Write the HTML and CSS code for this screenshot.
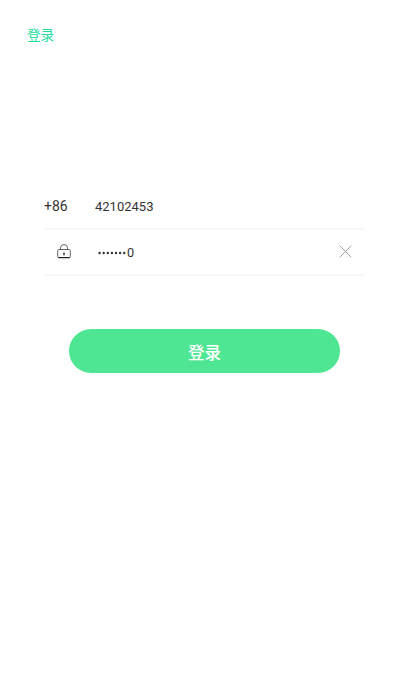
FILE: index.html
```html
<!DOCTYPE html>
<html lang="zh-CN">
<head>
<meta charset="utf-8">
<title>登录</title>
<link rel="stylesheet" href="styles.css">
</head>
<body>
<header class="title">登录</header>
<main>
  <form class="form">
    <div class="row"><span class="code">+86</span><span class="phone">42102453</span></div>
    <div class="row">
      <svg class="lock" viewBox="0 0 14 15"><path d="M3.5 5.5V4a3.5 3.5 0 0 1 7 0v1.5"/><rect x=".7" y="5.5" width="12.6" height="8.2" rx="1"/><path class="base" d="M1.3 13.6h11.4"/><path class="key" d="M7 8.5v2.7"/></svg>
      <span class="password"><svg class="dots" viewBox="0 0 29 4"><circle cx="1.6" cy="2" r="1.2"/><circle cx="5.7" cy="2" r="1.2"/><circle cx="9.8" cy="2" r="1.2"/><circle cx="13.9" cy="2" r="1.2"/><circle cx="18" cy="2" r="1.2"/><circle cx="22.1" cy="2" r="1.2"/><circle cx="26.2" cy="2" r="1.2"/></svg>0</span>
      <svg class="clear" viewBox="0 0 13 13"><path d="M.7.7l11.6 11.6M12.3.7L.7 12.3"/></svg>
    </div>
    <button class="submit" type="button">登录</button>
  </form>
</main>
</body>
</html>
```
FILE: styles.css
```css
* { box-sizing: border-box; }
body {
  margin: 0;
  height: 695px;
  background: #fff;
  color: #333;
  font-family: Roboto, "Noto Sans CJK SC", sans-serif;
}
.title {
  height: 183px;
  padding: 25px 0 0 27px;
  color: #22dc9c;
  font-size: 13.6px;
  line-height: 20px;
}
.form {
  width: 321px;
  margin-left: 44px;
}
.row {
  display: flex;
  align-items: center;
  height: 46px;
  border-bottom: 2px solid #f8f8f8;
}
.row:first-child { height: 47px; }
.code { width: 51px; font-size: 14px; }
.phone { padding-top: 2px; font-size: 13px; }
.lock {
  width: 14px;
  height: 15px;
  margin: 0 27px 1px 13px;
  fill: none;
  stroke: #555;
  stroke-width: .9;
}
.lock .base { stroke: #222; stroke-width: 1.1; }
.lock .key { stroke: #222; stroke-width: 1.3; }
.password { display: flex; align-items: center; font-size: 12.7px; }
.dots { width: 29px; height: 4px; margin-top: 1px; fill: #333; }
.clear {
  width: 13px;
  height: 13px;
  margin: 0 13px 1px auto;
  fill: none;
  stroke: #999;
  stroke-width: .9;
}
.submit {
  display: block;
  width: 271px;
  height: 43.5px;
  margin: 53px 0 0 25px;
  padding: 4px 0 0;
  border: 0;
  border-radius: 22px;
  background: #4fe693;
  color: #fff;
  font: 500 16.5px/42px Roboto, "Noto Sans CJK SC", sans-serif;
}
```
